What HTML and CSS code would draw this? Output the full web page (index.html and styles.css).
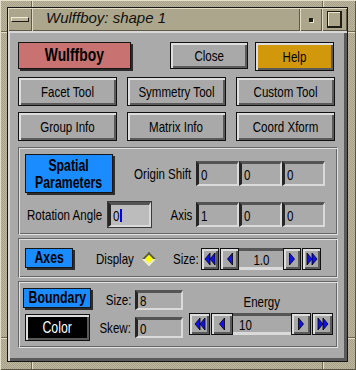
FILE: index.html
```html
<!DOCTYPE html>
<html>
<head>
<meta charset="utf-8">
<link rel="stylesheet" href="styles.css">
</head>
<body>
<div class="frame">
  <div class="window">
    <div class="titlebar">
      <div class="tb tb-menu"><span class="menu-bar"></span></div>
      <div class="tb tb-title">Wulffboy: shape 1</div>
      <div class="tb tb-min"><span class="min-dot"></span></div>
      <div class="tb tb-max"><span class="max-sq"></span></div>
    </div>
    <div class="content">
      <div class="row1">
        <div class="flat flat-red b-wulff"><span class="n">Wulffboy</span></div>
        <div class="btn b-close"><span class="n">Close</span></div>
        <div class="btn btn-help b-help"><span class="n">Help</span></div>
      </div>
      <div class="grid3">
        <div class="btn"><span class="n">Facet Tool</span></div>
        <div class="btn"><span class="n">Symmetry Tool</span></div>
        <div class="btn"><span class="n">Custom Tool</span></div>
        <div class="btn"><span class="n">Group Info</span></div>
        <div class="btn"><span class="n">Matrix Info</span></div>
        <div class="btn"><span class="n">Coord Xform</span></div>
      </div>

      <div class="panel p1">
        <div class="p1-row p1-a">
          <div class="flat flat-blue b-spatial"><span class="n">Spatial<br>Parameters</span></div>
          <div class="lbl lbl-right"><span class="n nr">Origin Shift</span></div>
          <div class="fields">
            <div class="field"><span class="n nl">0</span></div>
            <div class="field"><span class="n nl">0</span></div>
            <div class="field"><span class="n nl">0</span></div>
          </div>
        </div>
        <div class="p1-row p1-b">
          <div class="lbl lbl-rot"><span class="n nl">Rotation Angle</span></div>
          <div class="field field-focus"><span class="n nl">0</span><span class="cursor"></span></div>
          <div class="lbl lbl-right"><span class="n nr">Axis</span></div>
          <div class="fields">
            <div class="field"><span class="n nl">1</span></div>
            <div class="field"><span class="n nl">0</span></div>
            <div class="field"><span class="n nl">0</span></div>
          </div>
        </div>
      </div>

      <div class="panel p2">
        <div class="flat flat-blue b-axes"><span class="n">Axes</span></div>
        <div class="lbl lbl-display"><span class="n nl">Display</span></div>
        <span class="diamond"></span>
        <div class="lbl lbl-size"><span class="n nl">Size:</span></div>
        <div class="slider slider-size">
          <div class="arr arr-ll"><svg width="12" height="14" viewBox="0 0 12 14"><polygon points="1,7 6,1 6,13" fill="#1010f0" stroke="#000" stroke-width="0.8"/><polygon points="6,7 11,1 11,13" fill="#1010f0" stroke="#000" stroke-width="0.8"/></svg></div>
          <div class="arr arr-l"><svg width="8" height="14" viewBox="0 0 8 14"><polygon points="1.5,7 6.5,1 6.5,13" fill="#1010f0" stroke="#000" stroke-width="0.8"/></svg></div>
          <div class="sfield sfield-size"><span class="n">1.0</span></div>
          <div class="arr arr-r"><svg width="8" height="14" viewBox="0 0 8 14"><polygon points="6.5,7 1.5,1 1.5,13" fill="#1010f0" stroke="#000" stroke-width="0.8"/></svg></div>
          <div class="arr arr-rr"><svg width="12" height="14" viewBox="0 0 12 14"><polygon points="6,7 1,1 1,13" fill="#1010f0" stroke="#000" stroke-width="0.8"/><polygon points="11,7 6,1 6,13" fill="#1010f0" stroke="#000" stroke-width="0.8"/></svg></div>
        </div>
      </div>

      <div class="panel p3">
        <div class="flat flat-blue b-boundary"><span class="n">Boundary</span></div>
        <div class="lbl lbl-r3 c2 r1"><span class="n nr">Size:</span></div>
        <div class="field field-sm c3 r1 f-size"><span class="n nl">8</span></div>
        <div class="lbl lbl-energy c4 r1"><span class="n">Energy</span></div>
        <div class="btn btn-black b-color"><span class="n">Color</span></div>
        <div class="lbl lbl-r3 c2 r2 lbl-skew"><span class="n nr">Skew:</span></div>
        <div class="field field-sm c3 r2 f-skew"><span class="n nl">0</span></div>
        <div class="slider slider-energy c4 r2">
          <div class="arr arr-ll"><svg width="12" height="14" viewBox="0 0 12 14"><polygon points="1,7 6,1 6,13" fill="#1010f0" stroke="#000" stroke-width="0.8"/><polygon points="6,7 11,1 11,13" fill="#1010f0" stroke="#000" stroke-width="0.8"/></svg></div>
          <div class="arr arr-l"><svg width="8" height="14" viewBox="0 0 8 14"><polygon points="1.5,7 6.5,1 6.5,13" fill="#1010f0" stroke="#000" stroke-width="0.8"/></svg></div>
          <div class="sfield sfield-energy"><span class="n nl">10</span></div>
          <div class="arr arr-r"><svg width="8" height="14" viewBox="0 0 8 14"><polygon points="6.5,7 1.5,1 1.5,13" fill="#1010f0" stroke="#000" stroke-width="0.8"/></svg></div>
          <div class="arr arr-rr"><svg width="12" height="14" viewBox="0 0 12 14"><polygon points="6,7 1,1 1,13" fill="#1010f0" stroke="#000" stroke-width="0.8"/><polygon points="11,7 6,1 6,13" fill="#1010f0" stroke="#000" stroke-width="0.8"/></svg></div>
        </div>
      </div>
    </div>
  </div>
</div>
</body>
</html>
```

FILE: styles.css
```css
* { box-sizing: border-box; }
html, body { margin: 0; padding: 0; }
body {
  width: 356px;
  height: 370px;
  overflow: hidden;
  font-family: "Liberation Sans", Arial, sans-serif;
  font-size: 15px;
  color: #000;
}

/* narrow text: Helvetica-narrow look */
.n {
  display: inline-block;
  white-space: nowrap;
  transform: scaleX(0.77);
  transform-origin: center;
}
.nl { transform-origin: left center; }
.nr { transform-origin: right center; }

.frame {
  width: 356px;
  height: 370px;
  padding: 7px 8px 8px 7px;
  background:
    linear-gradient(to right, transparent 31px, #6e6852 31px, #6e6852 32px, #e4dfc8 32px, #e4dfc8 33px, transparent 33px),
    linear-gradient(to right, transparent 322px, #6e6852 322px, #6e6852 323px, #e4dfc8 323px, #e4dfc8 324px, transparent 324px),
    linear-gradient(to bottom, transparent 31px, #6e6852 31px, #6e6852 32px, #e4dfc8 32px, #e4dfc8 33px, transparent 33px),
    linear-gradient(to bottom, transparent 337px, #6e6852 337px, #6e6852 338px, #e4dfc8 338px, #e4dfc8 339px, transparent 339px),
    repeating-conic-gradient(#bdb69e 0 25%, #a7a189 0 50%) 0 0 / 2px 2px;
  box-shadow: inset 1px 1px #e4dfc8, inset -1px -1px #5c5644;
}

.window {
  height: 100%;
  border: 1px solid #161616;
  display: flex;
  flex-direction: column;
}

/* title bar */
.titlebar {
  height: 23px;
  flex: none;
  display: flex;
  background: #aca68c;
}
.tb {
  height: 23px;
  box-shadow: inset 1px 1px #e2dcc4, inset -1px -1px #5e5846;
  display: flex;
  align-items: center;
  justify-content: center;
}
.tb-menu { width: 24px; }
.tb-title {
  flex: 1;
  justify-content: flex-start;
  padding: 0 0 3px 14px;
  font-style: italic;
  font-size: 15px;
  line-height: 20px;
  color: #111;
}
.tb-min { width: 22px; }
.tb-max { width: 25px; }
.menu-bar {
  width: 18px;
  height: 5px;
  border: 1px solid;
  border-color: #f0ecd8 #1e1c14 #1e1c14 #f0ecd8;
  background: #bab49a;
}
.min-dot {
  width: 4px;
  height: 4px;
  background: #1e1c14;
  box-shadow: 1px 1px #efe9d2;
}
.max-sq {
  width: 15px;
  height: 17px;
  border: 1px solid #1e1c14;
  border-right-width: 2px;
  border-bottom-width: 2px;
  box-shadow: inset 1px 1px #ece6ce;
}

/* content */
.content {
  flex: 1;
  background: #aaaaaa;
  box-shadow: inset 2px 2px #d8d8d8, inset -3px -3px #5a5a5a;
  padding: 11px 0 0 10px;
}

.btn {
  border: 1px solid #111;
  background: #a9a9a9;
  box-shadow: inset 2px 2px #dedede, inset -2px -2px #5a5a5a;
  display: flex;
  align-items: center;
  justify-content: center;
  font-size: 15px;
  color: #000;
  white-space: nowrap;
}
.flat {
  border: 1px solid #151515;
  box-shadow: 2px 2px #2c2c2c;
  display: flex;
  align-items: center;
  justify-content: center;
  font-weight: bold;
  color: #000;
  text-align: center;
}
.flat-red { background: #c87272; }
.flat-blue { background: #1a8cff; }
.btn-help { background: #d2980c; }
.btn-black { background: #000; color: #fff; }

.row1 {
  display: flex;
  align-items: flex-start;
  height: 29px;
  margin-bottom: 6px;
}
.b-wulff { width: 113px; height: 27px; font-size: 18px; }
.b-close { width: 78px; height: 27px; margin-left: 39px; }
.b-help { width: 79px; height: 29px; margin-left: 7px; }

.grid3 {
  display: grid;
  grid-template-columns: 99px 99px 99px;
  grid-auto-rows: 29px;
  column-gap: 10px;
  row-gap: 6px;
}

/* panels */
.panel {
  width: 320px;
  margin-top: 6px;
  border: 1px solid;
  border-color: #666 #e2e2e2 #e2e2e2 #666;
  box-shadow: inset 1px 1px #e2e2e2, inset -1px -1px #666;
}

.lbl { white-space: nowrap; font-size: 15px; color: #000; }

.p1 { padding: 5px 12px 7px 6px; }
.p1-row { display: flex; align-items: center; }
.p1-a { height: 41px; }
.p1-b { height: 25px; margin-top: 8px; }
.b-spatial {
  width: 88px;
  height: 39px;
  font-size: 16px;
  line-height: 17px;
}
.fields { display: flex; }
.lbl-right { margin-left: auto; margin-right: 4px; }
.p1-a .lbl-right { margin-right: 5px; }
.lbl-rot { width: 81px; margin-left: 2px; }

.field {
  width: 43px;
  height: 25px;
  background: #aaaaaa;
  border-style: solid;
  border-width: 3px 2px 2px 3px;
  border-color: #545454 #dadada #dadada #262626;
  padding-left: 2px;
  display: flex;
  align-items: center;
  font-size: 15px;
}
.field-focus {
  background: #bcbcbc;
  outline: 1px solid #3a3a3a;
}
.cursor {
  display: inline-block;
  width: 2px;
  height: 13px;
  background: #0000e8;
  margin-left: -1px;
}

/* axes panel */
.p2 {
  margin-top: 3px;
  height: 40px;
  padding: 9px 0 0 6px;
  display: flex;
  align-items: flex-start;
}
.b-axes { width: 48px; height: 20px; font-size: 16px; flex: none; }
.lbl-display { width: 37px; flex: none; margin-left: 23px; line-height: 22px; }
.diamond {
  flex: none;
  width: 10px;
  height: 10px;
  margin: 6px 0 0 11px;
  transform: rotate(45deg);
  background: #ffff00;
  border: 2px solid;
  border-color: #555 #e6e6e6 #e6e6e6 #555;
}
.lbl-size { width: 27px; flex: none; margin-left: 19px; line-height: 22px; }

.slider { display: flex; height: 22px; flex: none; }
.slider-size { margin-left: 1px; }
.arr {
  flex: none;
  height: 22px;
  border: 1px solid #111;
  background: #a9a9a9;
  box-shadow: inset 2px 2px #dedede, inset -2px -2px #5a5a5a;
  display: flex;
  align-items: center;
  justify-content: center;
}
.slider-size .arr-ll { width: 18px; margin-right: 1px; }
.slider-size .arr-l { width: 19px; }
.slider-size .arr-r { width: 18px; margin-right: 1px; }
.slider-size .arr-rr { width: 19px; }
.sfield {
  flex: none;
  height: 22px;
  background: #a9a9a9;
  border-style: solid;
  border-width: 3px 0 3px 0;
  border-color: #555 transparent #dadada transparent;
  display: flex;
  align-items: center;
  font-size: 15px;
}
.sfield-size { width: 44px; justify-content: center; }

/* boundary panel */
.p3 {
  margin-top: 3px;
  height: 67px;
  padding: 6px 0 0 4px;
  display: grid;
  grid-template-columns: 72px 36px 48px 154px;
  grid-template-rows: 24px 29px;
  align-items: start;
}
.c2 { grid-column: 2; }
.c3 { grid-column: 3; margin-left: 4px; }
.c4 { grid-column: 4; margin-left: 10px; }
.r1 { grid-row: 1; }
.r2 { grid-row: 2; }
.b-boundary {
  grid-column: 1; grid-row: 1;
  width: 68px; height: 20px;
  font-size: 16px;
}
.b-color {
  grid-column: 1; grid-row: 2;
  width: 65px; height: 27px;
  margin: 2px 0 0 2px;
  font-size: 16px;
}
.lbl-r3 {
  display: flex;
  justify-content: flex-end;
  line-height: 20px;
  margin-top: 2px;
}
.lbl-skew { margin-top: 5px; line-height: 21px; }
.field-sm { width: 48px; height: 20px; }
.f-size { margin-top: 2px; }
.f-skew { margin-top: 5px; height: 21px; }
.lbl-energy {
  width: 144px;
  text-align: center;
  margin-top: 6px;
  line-height: 16px;
  padding-left: 2px;
}
.slider-energy { margin-top: 1px; }
.slider-energy .arr-ll { width: 21px; margin-right: 1px; }
.slider-energy .arr-l { width: 22px; }
.slider-energy .arr-r { width: 20px; margin-right: 1px; }
.slider-energy .arr-rr { width: 21px; }
.sfield-energy { width: 58px; padding-left: 6px; }
```
